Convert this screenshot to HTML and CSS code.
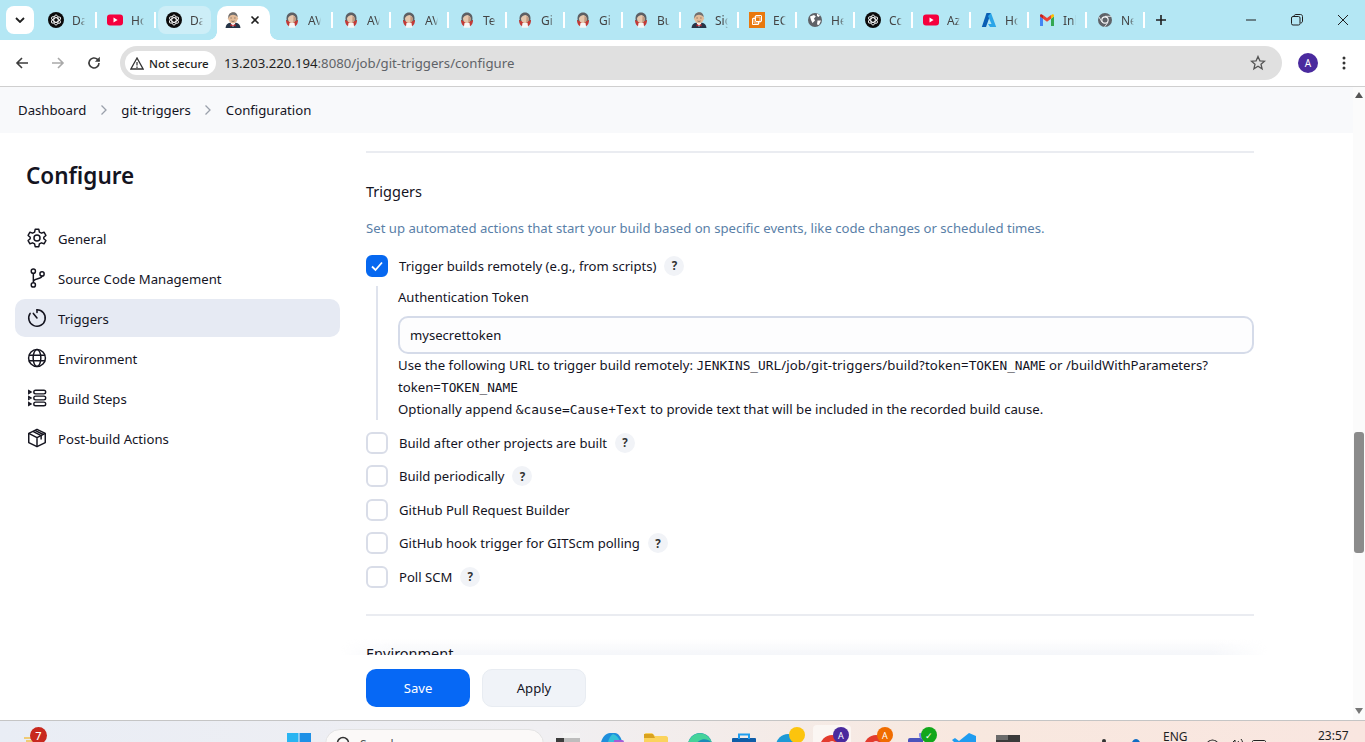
FILE: index.html
```html
<!DOCTYPE html>
<html lang="en">
<head>
<meta charset="utf-8">
<title>git-triggers Config - Jenkins</title>
<link rel="stylesheet" href="styles.css">
</head>
<body>
<svg class="defs" width="0" height="0" aria-hidden="true">
  <symbol id="fav-gpt" viewBox="0 0 16 16">
    <circle cx="8" cy="8" r="8" fill="#0b0b0b"/>
    <g fill="none" stroke="#fff" stroke-width=".9">
      <ellipse cx="8" cy="8" rx="2.2" ry="5"/>
      <ellipse cx="8" cy="8" rx="2.2" ry="5" transform="rotate(60 8 8)"/>
      <ellipse cx="8" cy="8" rx="2.2" ry="5" transform="rotate(120 8 8)"/>
    </g>
  </symbol>
  <symbol id="fav-yt" viewBox="0 0 16 16">
    <rect y="2.5" width="16" height="11" rx="3" fill="#f5003d"/>
    <path d="M6.5 5.6 10.6 8l-4.1 2.4z" fill="#fff"/>
  </symbol>
  <symbol id="fav-jk" viewBox="0 0 16 16">
    <path d="M2 8c0 4 2 7 6 7s6-3 6-7z" fill="#c23a36"/>
    <path d="M8 .5C4.500.5 2.500 3 2.500 6.500c0 1 .2 1.800.5 2.500h10c.3-.7.500-1.500.500-2.500C13.500 3 11.500.5 8 .5z" fill="#5d5f63"/>
    <path d="M8.300 3C6 3.300 4.300 4.700 4 6.500c-.1 2.500 1.500 4.700 4 4.700 2.200 0 3.700-2 3.700-4.400C11.700 5 10.300 3.300 8.300 3z" fill="#e6c7ad"/>
    <path d="M9.500 4c1.300.7 2.200 1.800 2.200 3 0 2-1 3.500-2.500 4z" fill="#c39a80"/>
    <path d="M5.500 11h5l.8 4.800H4.700z" fill="#f6f6f6"/>
  </symbol>
  <symbol id="fav-jk2" viewBox="0 0 16 16">
    <path d="M.5 16c.4-3.400 2-4.600 4.500-5.200h6c2.500.6 4.100 1.800 4.500 5.200z" fill="#263447"/>
    <path d="M5.600 11 8 15l2.400-4z" fill="#fff"/>
    <path d="M5.500 12.200 8 13l2.500-.8v2.200L8 13.500l-2.500.9z" fill="#c5242b"/>
    <path d="M8 .6c-3 0-4.600 2-4.500 4.800-.9.200-1 1.800 0 2.200.4 2 2 3.800 4.500 3.800s4.100-1.800 4.500-3.800c1-.4.900-2 0-2.200C12.600 2.600 11 .6 8 .6z" fill="#e4bb98"/>
    <path d="M3.400 6.500C2.700 2.400 5.400.2 8.200.2c2.600 0 4.800 2 4.300 5.400C12 3.600 10 2.800 8 2.800S4.300 3.800 3.400 6.500z" fill="#6f6f70"/>
    <path d="M5.500 6h1.200M9.300 6h1.200M6.500 9c1 .5 2 .5 3 0" fill="none" stroke="#333" stroke-width=".6"/>
  </symbol>
  <symbol id="fav-ec2" viewBox="0 0 16 16">
    <rect width="16" height="16" fill="#e9790d"/>
    <g fill="none" stroke="#fff" stroke-width="1">
      <rect x="6.500" y="3.500" width="6" height="6" rx=".5"/>
      <path d="M6 6.500H3.500v6h6V10"/>
      <rect x="5" y="5" width="6" height="6" rx=".5" stroke-opacity=".7"/>
    </g>
  </symbol>
  <symbol id="fav-globe" viewBox="0 0 16 16">
    <circle cx="8" cy="8" r="7" fill="#5f6368"/>
    <path d="M3 4.500 7 3l1.800 1.500L7 6.500 8 8.500 5.500 11 4 8zM10.500 8.500H14L12 13l-2-.5z" fill="#fff"/>
    <path d="M10 1.500l3 2-1.500 1.500L10 4z" fill="#fff"/>
  </symbol>
  <symbol id="fav-az" viewBox="0 0 16 16">
    <path d="M5.500 1H10L5 15H.8z" fill="#0a5fb4"/>
    <path d="M10 1l5.200 14H9l-2-3h3.500L7 4z" fill="#2ba5e8"/>
  </symbol>
  <symbol id="fav-gm" viewBox="0 0 16 16">
    <path d="M1 14V4.500l3 2.200V14z" fill="#4285f4"/>
    <path d="M12 14V6.700l3-2.200V14z" fill="#34a853"/>
    <path d="M12 3 8 6 4 3v3.700l4 3 4-3z" fill="#ea4335"/>
    <path d="M1 4.500V3.600c0-1 1.200-1.600 2-1L4 3.300v3.400z" fill="#c5221f"/>
    <path d="M15 4.500V3.600c0-1-1.200-1.600-2-1l-1 .7v3.400z" fill="#fbbc04"/>
  </symbol>
  <symbol id="fav-chrome" viewBox="0 0 16 16">
    <circle cx="8" cy="8" r="7" fill="#5f6368"/>
    <circle cx="8" cy="8" r="3.700" fill="#fff"/>
    <circle cx="8" cy="8" r="2.600" fill="#5f6368"/>
    <path d="M8 4.300h6.300M5 10.200 1.900 4.800M10.800 10.600 7.500 15" stroke="#fff" stroke-width=".8"/>
  </symbol>
</svg>

<div class="shell">
  <header class="tabstrip">
    <button class="tab-list" aria-label="Search tabs">
      <svg width="10" height="6" viewBox="0 0 10 6"><path d="M1 1l4 4 4-4" fill="none" stroke="#1f1f1f" stroke-width="1.800"/></svg>
    </button>
    <div class="tabs">
      <div class="tab"><svg class="fav"><use href="#fav-gpt"/></svg><span class="tab-title">Da</span></div>
      <div class="tab"><svg class="fav"><use href="#fav-yt"/></svg><span class="tab-title">Ho</span></div>
      <div class="tab tab-hover"><svg class="fav"><use href="#fav-gpt"/></svg><span class="tab-title">Da</span></div>
      <div class="tab tab-active"><svg class="fav"><use href="#fav-jk2"/></svg>
        <svg class="tab-close" width="10" height="10" viewBox="0 0 10 10"><path d="M1.500 1.500l7 7m0-7-7 7" stroke="#1f1f1f" stroke-width="1.600"/></svg>
      </div>
      <div class="tab"><svg class="fav"><use href="#fav-jk"/></svg><span class="tab-title">AV</span></div>
      <div class="tab"><svg class="fav"><use href="#fav-jk"/></svg><span class="tab-title">AV</span></div>
      <div class="tab"><svg class="fav"><use href="#fav-jk"/></svg><span class="tab-title">AV</span></div>
      <div class="tab"><svg class="fav"><use href="#fav-jk"/></svg><span class="tab-title">Te</span></div>
      <div class="tab"><svg class="fav"><use href="#fav-jk"/></svg><span class="tab-title">Gi</span></div>
      <div class="tab"><svg class="fav"><use href="#fav-jk"/></svg><span class="tab-title">Gi</span></div>
      <div class="tab"><svg class="fav"><use href="#fav-jk"/></svg><span class="tab-title">Bu</span></div>
      <div class="tab"><svg class="fav"><use href="#fav-jk2"/></svg><span class="tab-title">Sig</span></div>
      <div class="tab"><svg class="fav"><use href="#fav-ec2"/></svg><span class="tab-title">EC</span></div>
      <div class="tab"><svg class="fav"><use href="#fav-globe"/></svg><span class="tab-title">He</span></div>
      <div class="tab"><svg class="fav"><use href="#fav-gpt"/></svg><span class="tab-title">Cc</span></div>
      <div class="tab"><svg class="fav"><use href="#fav-yt"/></svg><span class="tab-title">Az</span></div>
      <div class="tab"><svg class="fav"><use href="#fav-az"/></svg><span class="tab-title">Ho</span></div>
      <div class="tab"><svg class="fav"><use href="#fav-gm"/></svg><span class="tab-title">Inl</span></div>
      <div class="tab"><svg class="fav"><use href="#fav-chrome"/></svg><span class="tab-title">Ne</span></div>
    </div>
    <svg class="new-tab" width="12" height="12" viewBox="0 0 12 12"><path d="M6 1v10M1 6h10" stroke="#1f1f1f" stroke-width="1.600"/></svg>
    <div class="win-controls">
      <svg width="12" height="12" viewBox="0 0 12 12"><path d="M1 6h10" stroke="#1f1f1f"/></svg>
      <svg width="12" height="12" viewBox="0 0 12 12"><rect x=".5" y="2.500" width="8.500" height="8.500" rx="1.500" fill="none" stroke="#1f1f1f"/><path d="M3 2.500C3 1.300 3.700.5 5 .5h4.500c1.200 0 2 .8 2 2V7c0 1.300-.8 2-2 2" fill="none" stroke="#1f1f1f"/></svg>
      <svg width="12" height="12" viewBox="0 0 12 12"><path d="M1 1l10 10M11 1 1 11" stroke="#1f1f1f"/></svg>
    </div>
  </header>

  <nav class="toolbar">
    <svg class="tool" width="16" height="16" viewBox="0 0 16 16"><path d="M14 8H3M8 3 3 8l5 5" fill="none" stroke="#3c3c3c" stroke-width="1.600"/></svg>
    <svg class="tool" width="16" height="16" viewBox="0 0 16 16"><path d="M2 8h11M8 3l5 5-5 5" fill="none" stroke="#a9a9a9" stroke-width="1.600"/></svg>
    <svg class="tool" width="16" height="16" viewBox="0 0 16 16"><path d="M13 8a5 5 0 1 1-1.500-3.600L13.500 6" fill="none" stroke="#3c3c3c" stroke-width="1.600"/><path d="M13.800 1.800v4.900H8.900z" fill="#3c3c3c"/></svg>
    <div class="omnibox">
      <div class="secure-chip">
        <svg width="14" height="13" viewBox="0 0 14 13"><path d="M7 1 .9 12h12.200z" fill="none" stroke="#333" stroke-width="1.300"/><path d="M7 5v3.500M7 9.500V11" stroke="#333" stroke-width="1.200"/></svg>
        <span>Not secure</span>
      </div>
      <span class="url"><span class="url-host">13.203.220.194</span>:8080/job/git-triggers/configure</span>
      <svg class="star" width="16" height="16" viewBox="0 0 16 16"><path d="M8 1.500l1.900 4.300 4.600.4-3.500 3 1.100 4.600L8 11.300l-4.100 2.500L5 9.200l-3.500-3 4.600-.4z" fill="none" stroke="#555" stroke-width="1.300"/></svg>
    </div>
    <span class="avatar">A</span>
    <svg class="kebab" width="4" height="14" viewBox="0 0 4 14"><circle cx="2" cy="2" r="1.500" fill="#333"/><circle cx="2" cy="7" r="1.500" fill="#333"/><circle cx="2" cy="12" r="1.500" fill="#333"/></svg>
  </nav>

  <div class="window-body">
    <div class="viewport">
      <div class="breadcrumbs">
        <span>Dashboard</span>
        <svg class="crumb-sep" width="8" height="12" viewBox="0 0 8 12"><path d="M1.500 1.500 6 6l-4.500 4.500" fill="none" stroke="#9aa0aa" stroke-width="1.300"/></svg>
        <span>git-triggers</span>
        <svg class="crumb-sep" width="8" height="12" viewBox="0 0 8 12"><path d="M1.500 1.500 6 6l-4.500 4.500" fill="none" stroke="#9aa0aa" stroke-width="1.300"/></svg>
        <span>Configuration</span>
      </div>

      <div class="content">
        <aside class="sidebar">
          <h1 class="side-title">Configure</h1>
          <ul class="side-nav">
            <li class="side-item">
              <svg class="side-icon" viewBox="0 0 24 24"><path d="M10 2.500h4l.6 3 2.200 1.200 2.900-1 2 3.500-2.300 2v1.600l2.300 2-2 3.500-2.900-1-2.200 1.200-.6 3h-4l-.6-3-2.200-1.200-2.900 1-2-3.500 2.300-2v-1.600l-2.300-2 2-3.500 2.900 1 2.200-1.200z" fill="none" stroke="#14141f" stroke-width="1.600" stroke-linejoin="round"/><circle cx="12" cy="12" r="3.300" fill="none" stroke="#14141f" stroke-width="1.600"/></svg>
              General
            </li>
            <li class="side-item">
              <svg class="side-icon" viewBox="0 0 24 24"><g fill="none" stroke="#14141f" stroke-width="1.600"><circle cx="8" cy="4.500" r="2.300"/><circle cx="8" cy="19.500" r="2.300"/><circle cx="17.500" cy="7.500" r="2.300"/><path d="M8 7v10M8 16c0-4 9.500-2.500 9.500-6.200"/></g></svg>
              Source Code Management
            </li>
            <li class="side-item side-active">
              <svg class="side-icon" viewBox="0 0 24 24"><g fill="none" stroke="#14141f" stroke-width="1.700" stroke-linecap="round"><path d="M12 3a9 9 0 1 1-7.500 4"/><path d="M12 12 8 7"/><path d="M12 3v3"/></g></svg>
              Triggers
            </li>
            <li class="side-item">
              <svg class="side-icon" viewBox="0 0 24 24"><g fill="none" stroke="#14141f" stroke-width="1.600"><circle cx="12" cy="12" r="9.200"/><ellipse cx="12" cy="12" rx="4.200" ry="9.200"/><path d="M3 9h18M3 15h18"/></g></svg>
              Environment
            </li>
            <li class="side-item">
              <svg class="side-icon" viewBox="0 0 24 24"><g fill="none" stroke="#14141f" stroke-width="1.500"><rect x="8.500" y="3.500" width="13" height="4" rx="2"/><rect x="8.500" y="10" width="13" height="4" rx="2"/><rect x="8.500" y="16.500" width="13" height="4" rx="2"/><path d="M3 4l2.500 1.500L3 7zM3 10.500 5.500 12 3 13.500zM3 17l2.500 1.500L3 20z"/></g></svg>
              Build Steps
            </li>
            <li class="side-item">
              <svg class="side-icon" viewBox="0 0 24 24"><g fill="none" stroke="#14141f" stroke-width="1.600" stroke-linejoin="round"><path d="M12 2.500 21 7v10l-9 4.500L3 17V7z"/><path d="M3 7l9 4.500L21 7M12 11.500v10"/><path d="M7.500 4.800l9 4.700v4M9.800 3.600l9 4.600"/></g></svg>
              Post-build Actions
            </li>
          </ul>
        </aside>

        <main class="main">
          <section class="section">
            <h2 class="section-title">Triggers</h2>
            <p class="section-desc">Set up automated actions that start your build based on specific events, like code changes or scheduled times.</p>

            <div class="check-row">
              <span class="box box-on"><svg width="14" height="12" viewBox="0 0 14 12"><path d="M2 6.500 5.500 10 12 2.500" fill="none" stroke="#fff" stroke-width="1.800"/></svg></span>
              <span>Trigger builds remotely (e.g., from scripts)</span>
              <span class="help">?</span>
            </div>
            <div class="nested">
              <label class="field-label">Authentication Token</label>
              <div class="text-input">mysecrettoken</div>
              <p class="hint">Use the following URL to trigger build remotely: <code>JENKINS_URL</code><span class="hint-path">/job/git-triggers/build?token=</span><code>TOKEN_NAME</code> or /buildWithParameters?token=<code>TOKEN_NAME</code><br>Optionally append <code>&amp;cause=Cause+Text</code> to provide text that will be included in the recorded build cause.</p>
            </div>

            <div class="check-row"><span class="box"></span><span>Build after other projects are built</span><span class="help">?</span></div>
            <div class="check-row"><span class="box"></span><span>Build periodically</span><span class="help">?</span></div>
            <div class="check-row"><span class="box"></span><span>GitHub Pull Request Builder</span></div>
            <div class="check-row"><span class="box"></span><span>GitHub hook trigger for GITScm polling</span><span class="help">?</span></div>
            <div class="check-row"><span class="box"></span><span>Poll SCM</span><span class="help">?</span></div>
          </section>
          <section class="section">
            <h2 class="section-title">Environment</h2>
          </section>
        </main>
      </div>

      <div class="save-bar">
        <button class="btn btn-save">Save</button>
        <button class="btn btn-apply">Apply</button>
      </div>
    </div>

    <div class="scrollbar">
      <svg width="8" height="6" viewBox="0 0 8 6"><path d="M4 0l4 6H0z" fill="#555"/></svg>
      <div class="thumb"></div>
      <svg width="8" height="6" viewBox="0 0 8 6"><path d="M4 6 0 0h8z" fill="#777"/></svg>
    </div>
  </div>

  <footer class="taskbar">
    <div class="tb-weather">
      <svg class="tb-sun" width="11" height="5" viewBox="0 0 11 5"><path d="M0 1h7M2 4h9" stroke="#f1c04c" stroke-width="1.500"/></svg>
      <span class="tb-badge">7</span>
    </div>
    <div class="tb-center">
      <svg class="tb-start" width="24" height="24" viewBox="0 0 24 24"><path d="M0 0h11.500v11.500H0z" fill="#29b5f2"/><path d="M12.500 0H24v11.500H12.500z" fill="#1e90e6"/><path d="M0 12.500h11.500V24H0z" fill="#1e90e6"/><path d="M12.500 12.500H24V24H12.500z" fill="#1670c9"/></svg>
      <div class="tb-search">
        <svg width="16" height="16" viewBox="0 0 16 16"><circle cx="7" cy="7" r="5.500" fill="none" stroke="#333" stroke-width="1.500"/></svg>
        <span>Search</span>
      </div>
      <div class="tb-apps">
        <span class="app"><svg viewBox="0 0 24 24"><rect x="7" y="0" width="17" height="8" fill="#f4f4f4"/><rect x="0" y="5" width="12" height="10" fill="#3c3c3c"/><rect x="8" y="5" width="16" height="10" fill="#bdbdbd"/></svg></span>
        <span class="app"><svg viewBox="0 0 24 24"><path d="M0 14C1 6 5 0 10 0h5c4 0 7 6 8 12l-9 2-6 6H0z" fill="#1f8fdc"/><path d="M7 14C8 7 10 3 13 1c4 1 7 6 9 11z" fill="#35c1d8"/><path d="M14 7h8a2 2 0 0 1 2 2v9H14z" fill="#a35bd8"/></svg></span>
        <span class="app"><svg viewBox="0 0 24 24"><path d="M0 2c0-1 1-2 2-2h6l3 3h11c1 0 2 1 2 2v19H0z" fill="#fbd35c"/><path d="M0 1h9l2 4H0z" fill="#d9a21f"/></svg></span>
        <span class="app"><svg viewBox="0 0 24 24"><circle cx="12" cy="12" r="12" fill="#1a8cb8"/><path d="M0 10C4-3 20-3 24 10c-3-4-9-5-13-2-2 1-2 3-2 4-3-3-6-3-9-2z" fill="#45d39a"/></svg></span>
        <span class="app"><svg viewBox="0 0 24 24"><rect x="0" y="5" width="24" height="18" rx="1" fill="#0f5da8"/><path d="M7 6V1.500h10V6" fill="none" stroke="#1e9ef0" stroke-width="2"/></svg></span>
        <span class="app"><svg viewBox="0 0 24 24"><circle cx="12" cy="13" r="12" fill="#1e9ad6"/><circle cx="13" cy="14" r="5" fill="#fff"/></svg><span class="pip pip-yellow"></span></span>
        <span class="app app-current"><svg viewBox="0 0 24 24"><circle cx="12" cy="14" r="12" fill="#e33b2e"/><path d="M12 14 24 14a12 12 0 0 1-16 11z" fill="#fbbc04"/><circle cx="12" cy="14" r="5" fill="#3b78e7" stroke="#fff" stroke-width="1.500"/></svg><span class="pip pip-purple">A</span></span>
        <span class="app"><svg viewBox="0 0 24 24"><circle cx="12" cy="14" r="12" fill="#e33b2e"/><path d="M12 14 24 14a12 12 0 0 1-16 11z" fill="#34a853"/><circle cx="12" cy="14" r="5" fill="#3b78e7" stroke="#fff" stroke-width="1.500"/></svg><span class="pip pip-orange">A</span></span>
        <span class="app"><svg viewBox="0 0 24 24"><rect x="0" y="5" width="15" height="19" rx="2" fill="#4b53bc"/><circle cx="15" cy="2" r="4" fill="#7b83eb"/></svg><span class="pip pip-green">✓</span></span>
        <span class="app"><svg viewBox="0 0 24 24"><path d="M17 0 24 3v18l-7 3L7 14l-4 3-3-2 4-4-4-4 3-2 4 3z" fill="#1f9cf0"/></svg></span>
        <span class="app"><svg viewBox="0 0 24 24"><rect x="0" y="2" width="24" height="22" fill="#3a3a3a"/><rect x="0" y="2" width="12" height="5" fill="#6b6b6b"/></svg></span>
      </div>
    </div>
    <div class="tb-tray">
      <svg class="tray-dot" width="4" height="4" viewBox="0 0 4 4"><circle cx="2" cy="2" r="2" fill="#333"/></svg>
      <svg class="tray-cloud" width="14" height="8" viewBox="0 0 14 8"><path d="M0 8c0-2 1-3 2.500-3C3 2 5 0 7 0s4 2 4.500 5C13 5 14 6 14 8z" fill="#0f6cc4"/></svg>
      <span class="tb-lang">ENG</span>
      <svg class="tray-wifi" width="15" height="8" viewBox="0 0 15 8"><path d="M1 7C2 3 5 1 7.500 1S13 3 14 7M4 8c.5-2 2-3 3.500-3S10.500 6 11 8" fill="none" stroke="#222" stroke-width="1.100"/></svg>
      <svg class="tray-vol" width="17" height="8" viewBox="0 0 17 8"><path d="M0 6h3l4-4v6M10 3c1 1 1 3 1 5M13 1c1.500 2 2 4 2 7" fill="none" stroke="#222" stroke-width="1"/></svg>
      <svg class="tray-bat" width="14" height="6" viewBox="0 0 14 6"><path d="M.5 6V1.500C.5 1 1 .5 1.500.5h11c.5 0 1 .5 1 1V6M3 3.500h8" fill="none" stroke="#222"/></svg>
      <span class="tb-clock">23:57</span>
    </div>
  </footer>
</div>
</body>
</html>
```
FILE: styles.css
```css
* { box-sizing: border-box; }
html, body { margin: 0; padding: 0; height: 100%; overflow: hidden; }
body { font-family: "Noto Sans", "Open Sans", sans-serif; color: #14141f; background: #fff; }
.defs { position: absolute; }
.shell { display: flex; flex-direction: column; width: 1365px; height: 742px; overflow: hidden; }

/* tab strip */
.tabstrip { display: flex; align-items: flex-start; height: 40px; flex: none; background: #b4e7f4; padding: 6px 0 0 6px; }
.tab-list { width: 28px; height: 28px; border: 0; border-radius: 8px; background: #fff; display: flex; align-items: center; justify-content: center; padding: 0; margin-right: 4px; }
.tabs { display: flex; }
.tab { position: relative; width: 58px; height: 28px; display: flex; align-items: center; padding-left: 10px; gap: 8px; font-size: 12px; color: #333; }
.tab:nth-child(-n+5) { width: 59px; }
.tab::after { content: ""; position: absolute; right: 0; top: 6px; width: 2px; height: 16px; background: #fff; }
.tab-hover, .tab-active { z-index: 1; }
.tab-hover::before { content: ""; position: absolute; left: 2px; right: 4px; top: 0; bottom: 0; background: #cdeef7; border-radius: 8px; z-index: -1; }
.tab-hover::after { display: none; }
.tab-active::before { content: ""; position: absolute; left: 2px; right: 4px; top: 0; height: 34px; background: #fff; border-radius: 10px 10px 0 0; z-index: -1; }
.tab-active::after { left: -6px; right: -4px; top: 26px; width: auto; height: 8px; z-index: -1; background: radial-gradient(circle at 0 0, transparent 7.500px, #fff 8px) left top / 8px 8px no-repeat, radial-gradient(circle at 100% 0, transparent 7.500px, #fff 8px) right top / 8px 8px no-repeat; }
.fav { width: 16px; height: 16px; flex: none; }
.tab-title { width: 13px; overflow: hidden; white-space: nowrap; color: #444; -webkit-mask-image: linear-gradient(90deg, #000 70%, transparent); mask-image: linear-gradient(90deg, #000 70%, transparent); }
.tab-close { margin-left: 1px; }
.new-tab { margin: 8px 0 0 10px; }
.win-controls { margin-left: auto; display: flex; gap: 34px; padding: 8px 16px 0 0; width: 136px; justify-content: flex-end; }

/* toolbar */
.toolbar { display: flex; align-items: center; height: 47px; flex: none; background: #fff; border-bottom: 1px solid #cfcfcf; border-radius: 8px 8px 0 0; padding: 0 13px 0 14px; position: relative; }
.tool { margin-right: 20px; }
.tool:nth-of-type(3) { margin-right: 18px; }
.omnibox { flex: none; width: 1162px; height: 34px; background: #e0e0e0; border-radius: 17px; display: flex; align-items: center; padding: 0 16px 0 5px; }
.secure-chip { display: flex; align-items: center; gap: 5px; height: 24px; width: 91px; padding-left: 5px; background: #fff; border-radius: 12px; font-size: 11.500px; font-weight: 500; color: #1f1f1f; white-space: nowrap; }
.url { margin-left: 8px; font-size: 13.200px; color: #5f6368; white-space: nowrap; }
.url-host { color: #1f1f1f; }
.star { margin-left: auto; }
.avatar { width: 20px; height: 20px; margin-left: 16px; border-radius: 50%; background: #4a2a9e; color: #fff; font-size: 10px; display: flex; align-items: center; justify-content: center; }
.kebab { margin-left: 24px; }

/* page */
.window-body { flex: 1; min-height: 0; display: flex; }
.viewport { position: relative; flex: 1; min-width: 0; overflow: hidden; background: #fff; }
.viewport::before { content: ""; position: absolute; left: 340px; right: 85px; bottom: 65px; height: 16px; background: linear-gradient(rgba(240,242,247,0), rgba(240,242,247,.7)); -webkit-mask-image: linear-gradient(90deg, transparent, #000 6%, #000 94%, transparent); mask-image: linear-gradient(90deg, transparent, #000 6%, #000 94%, transparent); }
.breadcrumbs { display: flex; align-items: center; height: 46px; padding: 0 0 1px 18px; gap: 13.500px; background: #f8f9fb; font-size: 13.200px; color: #14141f; }
.content { position: relative; display: flex; }
.sidebar { width: 366px; flex: none; padding: 27px 26px 0 15px; }
.side-title { margin: 0 0 27px 11px; font-size: 22.500px; line-height: 32px; font-weight: 600; color: #14141f; }
.side-nav { list-style: none; margin: 0; padding: 0; }
.side-item { display: flex; align-items: center; gap: 10px; height: 38px; margin-bottom: 2px; padding: 2px 0 0 11px; border-radius: 10px; font-size: 13.150px; color: #14141f; }
.side-active { background: #e6eaf3; }
.side-icon { width: 22px; height: 22px; flex: none; margin-top: -2px; }

.main { width: 888px; flex: none; padding-top: 18px; }
.section { border-top: 2px solid #eaecf1; padding-top: 26px; }
.section + .section { margin-top: 20px; padding-top: 25px; }
.section-title { margin: 0; font-size: 14.500px; line-height: 24px; font-weight: 400; color: #14141f; }
.section-desc { margin: 15px 0 16.500px; font-size: 13.150px; line-height: 20px; color: #5a7fa8; }
.check-row { display: flex; align-items: center; height: 33.500px; font-size: 13.100px; color: #14141f; }
.check-row:first-of-type { height: 22px; }
.box { width: 22px; height: 22px; flex: none; margin-right: 11px; background: #fff; border: 2px solid #d9dde8; border-radius: 6px; display: flex; align-items: center; justify-content: center; }
.box-on { background: #0668f0; border-color: #0668f0; }
.help { width: 20px; height: 20px; margin-left: 8px; border-radius: 50%; background: #f1f3f7; display: flex; align-items: center; justify-content: center; font-size: 11.500px; font-weight: 700; color: #333; }
.nested { margin: 9.500px 0 6px 10px; padding-left: 20px; border-left: 2px solid #dfe3ed; height: 134px; }
.field-label { display: block; font-size: 13.100px; line-height: 22px; color: #14141f; }
.text-input { margin-top: 8px; height: 38px; display: flex; align-items: center; padding-left: 10px; border: 2px solid #d5dbe9; border-radius: 10px; background: #fdfdfe; font-size: 13.100px; color: #14141f; }
.hint { margin: 0; font-size: 13.200px; line-height: 22px; color: #14141f; }
.hint-path { letter-spacing: .13px; }
code { font-family: "DejaVu Sans Mono", "Liberation Mono", monospace; font-size: 12.800px; line-height: 1; }

.save-bar { position: absolute; z-index: 2; left: 0; right: 0; bottom: 0; height: 65px; display: flex; align-items: flex-start; gap: 12px; padding: 14px 0 0 366px; background: #fff; }
.btn { width: 104px; height: 38px; border-radius: 10px; font: inherit; font-size: 13.100px; cursor: pointer; }
.btn-save { border: 0; background: #0668f5; color: #fff; }
.btn-apply { border: 1px solid #e8ecf2; background: #f0f3f8; color: #14141f; }

/* scrollbar */
.scrollbar { width: 12px; flex: none; background: #fbfbfb; display: flex; flex-direction: column; align-items: center; padding: 5px 0 6px; }
.thumb { width: 10px; height: 121px; margin-top: 334px; margin-bottom: auto; background: #8b8b8b; border-radius: 3px; }

/* taskbar */
.taskbar { height: 22px; flex: none; display: flex; overflow: hidden; border-top: 1px solid #c5c5c5; background: linear-gradient(90deg, #e9edf5 0%, #f0eff2 40%, #f8e8df 70%, #f9e6e0 100%); }
.tb-weather { position: relative; width: 287px; flex: none; padding: 16px 0 0 24px; }
.tb-sun { display: block; }
.tb-badge { position: absolute; left: 30px; top: 6px; display: flex; align-items: center; justify-content: center; width: 17px; height: 17px; border-radius: 50%; background: #c8281e; color: #fff; font-size: 11px; font-weight: 500; }
.tb-center { display: flex; align-items: flex-start; flex: none; }
.tb-start { margin-top: 12px; }
.tb-search { display: flex; gap: 8px; width: 219px; height: 30px; margin: 8px 0 0 14px; padding: 6px 0 0 10px; background: #fbf9f8; border: 1px solid #e3e3e3; border-radius: 15px; font-size: 12px; color: #555; }
.tb-apps { display: flex; margin-left: 2px; }
.app { position: relative; width: 44px; height: 24px; padding: 12px 10px 0; flex: none; }
.app svg { position: relative; display: block; width: 24px; height: 24px; }
.app-current::before { content: ""; position: absolute; left: 3px; right: 3px; top: 4px; height: 24px; background: #fbf6f3; border-radius: 4px 4px 0 0; }
.pip { position: absolute; left: 23px; top: 6px; width: 16px; height: 16px; border-radius: 50%; display: flex; align-items: center; justify-content: center; color: #fff; font-size: 9px; }
.pip-yellow { background: #fcc40d; }
.pip-purple { background: #4a2a9e; }
.pip-orange { background: #f06c00; }
.pip-green { background: #12a71b; }
.tb-tray { display: flex; align-items: flex-start; width: 265px; margin-left: auto; flex: none; font-size: 12px; color: #1f1f1f; }
.tray-dot { margin: 18px 0 0 2px; }
.tray-cloud { margin: 18px 0 0 23px; }
.tb-lang { width: 24px; margin: 9px 0 0 20px; line-height: 14px; }
.tray-wifi { margin: 18px 0 0 18px; }
.tray-vol { margin: 17px 0 0 8px; }
.tray-bat { margin: 19px 0 0 7px; }
.tb-clock { margin: 8px 0 0 52px; line-height: 14px; }
```
